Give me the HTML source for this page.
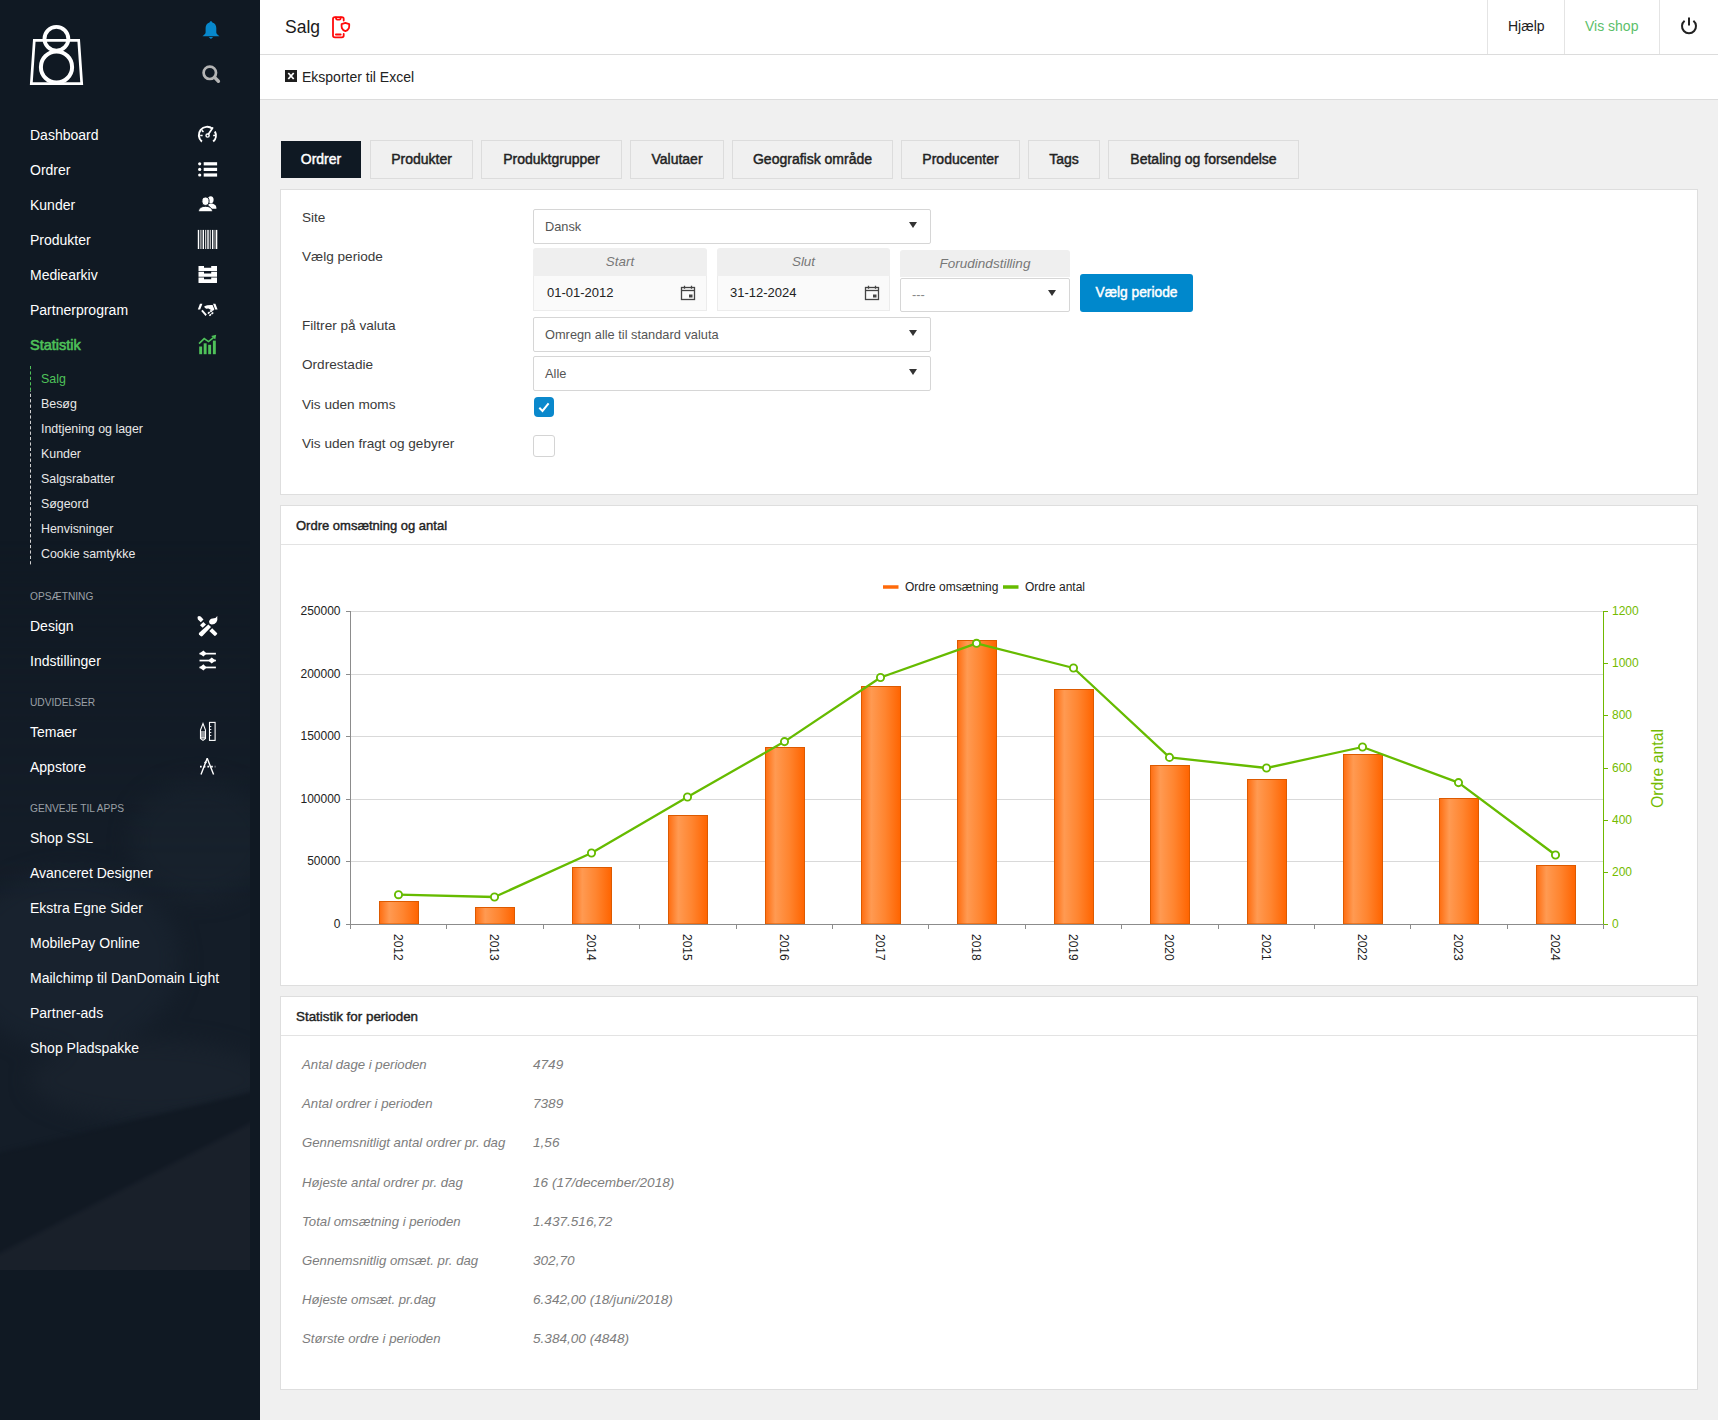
<!DOCTYPE html>
<html><head><meta charset="utf-8">
<style>
*{margin:0;padding:0;box-sizing:border-box}
html,body{width:1718px;height:1420px;overflow:hidden;background:#f0f0f0;font-family:"Liberation Sans",sans-serif;color:#222}
.abs{position:absolute}
#side{position:absolute;left:0;top:0;width:260px;height:1420px;background:#101923}
#side .bgimg{position:absolute;left:0;top:560px;width:250px;height:710px;background:linear-gradient(160deg,#131d28 0%,#1a2430 40%,#16202b 70%,#1a222d 100%)}
.mi{position:absolute;left:30px;font-size:14px;color:#fff;line-height:16px;white-space:nowrap}
.sub{position:absolute;left:41px;font-size:12.4px;color:#e8e8e8;line-height:16px;white-space:nowrap}
.sec{position:absolute;left:30px;font-size:10.2px;color:#9aa0a6;line-height:12px;white-space:nowrap}
.ic{position:absolute;left:197px;width:22px;height:22px}
#hdr{position:absolute;left:260px;top:0;width:1458px;height:55px;background:#fff;border-bottom:1px solid #dcdcdc}
#bar2{position:absolute;left:260px;top:55px;width:1458px;height:45px;background:#fff;border-bottom:1px solid #dcdcdc}
.tab{position:absolute;top:140px;height:39px;background:#f0f0f0;border:1px solid #dcdcdc;font-size:14px;font-weight:normal;-webkit-text-stroke:0.45px #222;color:#222;text-align:center;line-height:37px}
.tab.on{background:#0f1923;color:#fff;-webkit-text-stroke:0.45px #fff;border:none;top:141px;height:37px;line-height:37px}
.panel{position:absolute;left:280px;width:1418px;background:#fff;border:1px solid #dedede}
.lbl{position:absolute;left:302px;font-size:13.6px;color:#3a3a3a;line-height:16px;white-space:nowrap}
.sel{position:absolute;left:533px;width:398px;height:35px;border:1px solid #d6d6d6;border-radius:2px;background:#fff;font-size:12.8px;color:#555;line-height:33px;padding-left:11px}
.sel .arr{position:absolute;right:13px;top:12px;width:0;height:0;border-left:4px solid transparent;border-right:4px solid transparent;border-top:6px solid #333}
.ph{position:absolute;font-size:13.4px;font-style:italic;color:#777;text-align:center;background:#efefef;border-radius:3px 3px 0 0;line-height:27px}
.stl{position:absolute;left:302px;font-size:13.2px;font-style:italic;color:#7d7d7d;line-height:16px;white-space:nowrap}
.stv{position:absolute;left:533px;font-size:13.6px;font-style:italic;color:#7d7d7d;line-height:16px;white-space:nowrap}
</style></head><body>
<div id="side">
  <svg class="abs" style="left:0;top:540px" width="250" height="730" viewBox="0 0 250 730">
  <defs>
    <linearGradient id="fade" x1="0" y1="0" x2="0" y2="1">
      <stop offset="0" stop-color="#fff" stop-opacity="0"/>
      <stop offset="0.22" stop-color="#fff" stop-opacity="0.6"/>
      <stop offset="0.5" stop-color="#fff" stop-opacity="1"/>
      <stop offset="1" stop-color="#fff" stop-opacity="1"/>
    </linearGradient>
    <mask id="fm"><rect x="0" y="0" width="250" height="730" fill="url(#fade)"/></mask>
    <filter id="bl" x="-20%" y="-20%" width="140%" height="140%" color-interpolation-filters="sRGB"><feGaussianBlur stdDeviation="10"/></filter>
    <filter id="bl2" x="-5%" y="-5%" width="110%" height="110%" color-interpolation-filters="sRGB"><feGaussianBlur stdDeviation="2"/></filter>
    <clipPath id="cp"><rect x="0" y="0" width="250" height="730"/></clipPath>
  </defs>
  <g mask="url(#fm)" clip-path="url(#cp)">
    <rect x="0" y="0" width="250" height="730" fill="#141d28"/>
    <g filter="url(#bl)">
      <ellipse cx="70" cy="420" rx="110" ry="90" fill="#18222e"/>
      <ellipse cx="200" cy="300" rx="70" ry="60" fill="#18222d"/>
      <ellipse cx="150" cy="540" rx="120" ry="40" fill="#19222d"/>
    </g>
    <g filter="url(#bl2)">
      <path d="M-10 615 L260 550 L260 578 L-10 718Z" fill="#111923"/>
      <path d="M-10 718 L260 578 L260 740 L-10 740Z" fill="#19202a"/>
    </g>
  </g>
</svg>
<svg class="abs" style="left:0;top:0" width="260" height="1420" viewBox="0 0 260 1420">
<!-- logo -->
<g fill="none" stroke="#fff">
<path d="M34.3 40.4 H78.7 L81.7 83.6 H31.3 Z" stroke-width="2.7"/>
<circle cx="56.4" cy="38.8" r="11.9" stroke-width="3.9"/>
<circle cx="56.5" cy="67" r="15.6" stroke-width="4"/>
</g>
<!-- bell -->
<g fill="#0788cc">
<path d="M210.9 21.2c.8 0 1.4.6 1.4 1.3c2.7.6 4 2.9 4 5.6v4.5c0 1.2 1.5 2.6 3 3.3v.3H202.6v-.3c1.5-.7 3-2.1 3-3.3v-4.5c0-2.7 1.3-5 4-5.6c0-.7.6-1.3 1.3-1.3z"/>
<path d="M208.7 36.9h4.5l-2.25 2.1z"/>
</g>
<!-- search -->
<circle cx="209.8" cy="72.8" r="6.2" fill="none" stroke="#b4b4b4" stroke-width="2.7"/>
<path d="M214.6 77.4 L218.4 81.2" stroke="#b4b4b4" stroke-width="3.4" stroke-linecap="round"/>
<!-- dashboard gauge -->
<g fill="none" stroke="#fff">
<path d="M201.9 141.6 A8.3 8.3 0 0 1 212.4 128.7" stroke-width="2"/>
<path d="M214.9 131.4 A8.3 8.3 0 0 1 213.2 141.5" stroke-width="2"/>
<path d="M200.2 135.5 h2.4 M213.2 135.5 h2.4 M201.8 130.4 l1.7 1.5" stroke-width="1.5"/>
<path d="M208.2 134.4 L212.6 128" stroke-width="1.7" stroke-linecap="round"/>
<circle cx="207.6" cy="135.5" r="1.6" stroke-width="1.4"/>
</g>
<!-- list -->
<g fill="#fff">
<circle cx="199.7" cy="163.8" r="1.6"/><circle cx="199.7" cy="169.4" r="1.6"/><circle cx="199.7" cy="175" r="1.6"/>
<rect x="203.7" y="162.2" width="13.4" height="3.2"/><rect x="203.7" y="167.8" width="13.4" height="3.2"/><rect x="203.7" y="173.4" width="13.4" height="3.2"/>
</g>
<!-- users -->
<g fill="#fff">
<ellipse cx="210.7" cy="199.8" rx="2.9" ry="3.5"/>
<path d="M208 204.8 c1-.8 1.8-1.2 2.8-1.2 c3 0 5.6 1.6 5.6 4.6 v0.6 h-5z"/>
<ellipse cx="205.5" cy="201.2" rx="3.6" ry="4.2" stroke="#101923" stroke-width="1"/>
<path d="M198.5 211.8 c0-3.2 2.4-5.5 7-5.5 s7 2.3 7 5.5 z" stroke="#101923" stroke-width="1"/>
</g>
<!-- barcode -->
<g>
<rect x="197.8" y="229.9" width="1.4" height="19.1" fill="#fff"/>
<rect x="200.3" y="229.9" width="1.2" height="19.1" fill="#c8c8c8"/>
<rect x="202.6" y="229.9" width="1.4" height="19.1" fill="#fff"/>
<rect x="205" y="229.9" width="1.3" height="19.1" fill="#c8c8c8"/>
<rect x="207.3" y="229.9" width="1.4" height="19.1" fill="#fff"/>
<rect x="209.7" y="229.9" width="1.2" height="19.1" fill="#c8c8c8"/>
<rect x="212" y="229.9" width="1.4" height="19.1" fill="#fff"/>
<rect x="214.4" y="229.9" width="1.2" height="19.1" fill="#aaa"/>
<rect x="216" y="229.9" width="1.3" height="19.1" fill="#fff"/>
</g>
<!-- archive -->
<g fill="#fff">
<path d="M198.5 266 h5.5 v1.8 h7.2 v-1.8 h5.8 v5 h-18.5z"/>
<path d="M198.5 271.8 h5.5 v1.6 h7.2 v-1.6 h5.8 v5 h-18.5z"/>
<path d="M198.5 277.6 h5.5 v1.6 h7.2 v-1.6 h5.8 v4.8 q0 .6 -.6 .6 h-17.3 q-.6 0 -.6 -.6z"/>
</g>
<!-- handshake -->
<g fill="#fff">
<path d="M200 303.8 L202.4 303.8 L200.2 309.4 L197.8 309.4Z"/>
<path d="M213 303.8 L215.4 303.8 L217.6 309.4 L215.2 309.4Z"/>
<path d="M204.3 306.2 Q207 304.8 212.6 305 L214.4 309.6 L212.8 311 L208.4 308.4 L206.2 308.8 L204.6 307.6Z"/>
<path d="M201.2 311 L202.6 309.8 L206.8 314.6 L205.6 316Z"/>
<path d="M207.4 313 L209 311.6 L210.2 312.6 L208.6 314.2Z M209.6 311 L211 309.8 L212.6 311 L211 312.4Z M208.8 315.2 L210.4 313.8 L211.6 314.8 L210 316.2Z M211 313.4 L212.6 312 L213.8 313 L212.2 314.4Z"/>
</g>
<!-- stats -->
<g fill="#4fc25a">
<rect x="199.2" y="346.5" width="2.9" height="7.7"/>
<rect x="203.7" y="343.3" width="2.9" height="10.9"/>
<rect x="208.2" y="344.8" width="2.9" height="9.4"/>
<rect x="212.9" y="340.6" width="2.9" height="13.6"/>
<path d="M199 343.6 L204.2 338.6 L208.5 341.6 L213.5 337.6" fill="none" stroke="#4fc25a" stroke-width="1.6"/>
<path d="M211.2 335.9 L216.2 334.7 L215.3 339.6Z"/>
</g>
<!-- design -->
<g fill="#fff">
<path d="M199.2 632.8 L208.4 624.4 L211 627 L202.5 636 Q201.5 636.8 200.5 636 L199 634.5 Q198.5 633.6 199.2 632.8Z"/>
<path d="M200 625.2 L202.7 627.8 L206 624.5 L203.3 621.9Z"/>
<path d="M212.2 628.3 L217 633 Q217.5 633.6 217 634.3 L215.4 635.7 Q214.7 636.2 214.1 635.6 L209.3 630.9Z"/>
<path d="M197.8 616.5 Q199 615.5 200.7 616.6 L203.5 619.6 L200.8 622.3 L197.9 619.4 Q197.2 617.6 197.8 616.5Z"/>
<path d="M209 621.8 Q209.6 618.8 212.6 618.5 Q215.9 618.5 217.3 616 Q217.8 620 216.4 622.3 Q214.6 624.7 211.6 624.6 Q209.2 624.2 209 621.8Z"/>
</g>
<!-- sliders -->
<g fill="#fff">
<rect x="199.5" y="652.8" width="16.4" height="1.7"/>
<rect x="199.5" y="659.7" width="16.4" height="1.7"/>
<rect x="199.5" y="666.6" width="16.4" height="1.7"/>
<path d="M199.5 653.6 L203.4 650.6 L206.6 653.6 L203.4 656.6Z"/>
<path d="M208.2 660.5 L211.7 657.4 L215.6 660.5 L211.7 663.6Z"/>
<path d="M199.5 667.4 L203.4 664.3 L206.6 667.4 L203.4 670.4Z"/>
</g>
<!-- temaer -->
<g fill="none" stroke="#fff" stroke-width="1.1">
<path d="M200.5 730 L203 723.6 L205.5 730 V738.5 L203 740.4 L200.5 738.5Z"/>
<path d="M202 731 V738 M204 731 V738 M200.6 738 h4.8" />
<rect x="209.5" y="722.4" width="5.6" height="18"/>
<path d="M209.5 726.5 h1.8 M209.5 729.5 h1.8 M209.5 732.5 h1.8 M209.5 735.5 h1.8" stroke-width="0.9"/>
</g>
<!-- appstore -->
<g fill="none" stroke="#fff">
<path d="M201 774.5 L207.2 758.3 M207.2 758.3 L213.6 774.5" stroke-width="1.4"/>
<path d="M200 766.7 H215.3" stroke-width="1.7" stroke-dasharray="1.7 2"/>
<circle cx="205.5" cy="762.5" r="0.8" stroke-width="1"/>
</g>
</svg>
  <div class="mi" style="top:127px">Dashboard</div>
  <div class="mi" style="top:162px">Ordrer</div>
  <div class="mi" style="top:197px">Kunder</div>
  <div class="mi" style="top:232px">Produkter</div>
  <div class="mi" style="top:267px">Mediearkiv</div>
  <div class="mi" style="top:302px">Partnerprogram</div>
  <div class="mi" style="top:337px;color:#4fc25a;-webkit-text-stroke:0.6px #4fc25a;font-size:14.5px">Statistik</div>
  <svg class="abs" style="left:29px;top:366px" width="3" height="200" viewBox="0 0 3 200">
    <path d="M1.5 0 V25" stroke="#4fc25a" stroke-width="1" stroke-dasharray="3.2 2.2"/>
    <path d="M1.5 25 V200" stroke="#d0d0d0" stroke-width="1" stroke-dasharray="3.2 2.2" stroke-dashoffset="2.6"/>
  </svg>
  <div class="sub" style="top:371px;color:#4fc25a">Salg</div>
  <div class="sub" style="top:396px">Besøg</div>
  <div class="sub" style="top:421px">Indtjening og lager</div>
  <div class="sub" style="top:446px">Kunder</div>
  <div class="sub" style="top:471px">Salgsrabatter</div>
  <div class="sub" style="top:496px">Søgeord</div>
  <div class="sub" style="top:521px">Henvisninger</div>
  <div class="sub" style="top:546px">Cookie samtykke</div>
  <div class="sec" style="top:591px">OPSÆTNING</div>
  <div class="mi" style="top:618px">Design</div>
  <div class="mi" style="top:653px">Indstillinger</div>
  <div class="sec" style="top:697px">UDVIDELSER</div>
  <div class="mi" style="top:724px">Temaer</div>
  <div class="mi" style="top:759px">Appstore</div>
  <div class="sec" style="top:803px">GENVEJE TIL APPS</div>
  <div class="mi" style="top:830px">Shop SSL</div>
  <div class="mi" style="top:865px">Avanceret Designer</div>
  <div class="mi" style="top:900px">Ekstra Egne Sider</div>
  <div class="mi" style="top:935px">MobilePay Online</div>
  <div class="mi" style="top:970px">Mailchimp til DanDomain Light</div>
  <div class="mi" style="top:1005px">Partner-ads</div>
  <div class="mi" style="top:1040px">Shop Pladspakke</div>
</div>
<div id="hdr"></div>
<div class="abs" style="left:285px;top:17px;font-size:17.5px;color:#1a1a1a;line-height:20px">Salg</div>
<svg class="abs" style="left:325px;top:10px" width="35" height="35" viewBox="0 0 35 35">
  <g fill="none" stroke="#ff0a0a" stroke-width="1.8" stroke-linecap="round">
  <path d="M18.7 10.6 V9 Q18.7 7.1 16.8 7.1 H9.9 Q8 7.1 8 9 V25.5 Q8 27.4 9.9 27.4 H16.8 Q18.7 27.4 18.7 25.5 V24"/>
  <path d="M10.9 7.4 Q11 9.6 12.3 9.6 H14.4 Q15.7 9.6 15.8 7.4"/>
  <path d="M10.9 24.5 H15.7"/>
  <path d="M20.4 12.9 L16.6 14.1 Q16.4 16.3 16.9 18.2 Q17.8 20.4 20.4 21.2 Q23 20.4 23.9 18.2 Q24.4 16.3 24.2 14.1 Z" stroke-linejoin="round"/>
  </g>
</svg>
<div class="abs" style="left:1487px;top:0;width:1px;height:54px;background:#e4e4e4"></div>
<div class="abs" style="left:1564px;top:0;width:1px;height:54px;background:#e4e4e4"></div>
<div class="abs" style="left:1659px;top:0;width:1px;height:54px;background:#e4e4e4"></div>
<div class="abs" style="left:1508px;top:18px;font-size:14px;color:#222;line-height:16px">Hjælp</div>
<div class="abs" style="left:1585px;top:18px;font-size:14px;color:#5cc06a;line-height:16px">Vis shop</div>
<svg class="abs" style="left:1679px;top:16px" width="20" height="20" viewBox="0 0 20 20">
  <path d="M5.6 4.8 A7 7 0 1 0 14.4 4.8" fill="none" stroke="#222" stroke-width="2"/>
  <path d="M10 1.5 V9.5" stroke="#222" stroke-width="2"/>
</svg>
<div id="bar2"></div>
<svg class="abs" style="left:285px;top:70px" width="12" height="12" viewBox="0 0 12 12">
  <rect x="0" y="0" width="12" height="12" fill="#1e1e1e"/>
  <path d="M3.3 3 L8.7 9 M8.7 3 L3.3 9" stroke="#fff" stroke-width="1.8"/>
</svg>
<div class="abs" style="left:302px;top:69px;font-size:14px;color:#222;line-height:16px">Eksporter til Excel</div>

<!-- tabs -->
<div class="tab on" style="left:281px;width:80px">Ordrer</div>
<div class="tab" style="left:370px;width:103px">Produkter</div>
<div class="tab" style="left:481px;width:141px">Produktgrupper</div>
<div class="tab" style="left:630px;width:94px">Valutaer</div>
<div class="tab" style="left:732px;width:161px">Geografisk område</div>
<div class="tab" style="left:901px;width:119px">Producenter</div>
<div class="tab" style="left:1028px;width:72px">Tags</div>
<div class="tab" style="left:1108px;width:191px">Betaling og forsendelse</div>

<!-- form panel -->
<div class="panel" style="top:189px;height:306px"></div>
<div class="lbl" style="top:210px">Site</div>
<div class="sel" style="top:209px">Dansk<div class="arr"></div></div>
<div class="lbl" style="top:249px">Vælg periode</div>
<div class="ph" style="left:533px;top:248px;width:174px;height:28px">Start</div>
<div class="abs" style="left:533px;top:276px;width:174px;height:35px;background:#fafafa;border:1px solid #ececec;border-top:none;font-size:13px;color:#222;line-height:34px;padding-left:13px">01-01-2012</div>
<div class="ph" style="left:717px;top:248px;width:173px;height:28px">Slut</div>
<div class="abs" style="left:717px;top:276px;width:173px;height:35px;background:#fafafa;border:1px solid #ececec;border-top:none;font-size:13px;color:#222;line-height:34px;padding-left:12px">31-12-2024</div>
<svg class="abs" style="left:680px;top:285px" width="16" height="16" viewBox="0 0 16 16">
  <rect x="1.5" y="2.5" width="13" height="12" fill="none" stroke="#444" stroke-width="1.3"/>
  <path d="M1.5 5.5 h13" stroke="#444" stroke-width="1.3"/>
  <path d="M4.5 0.8 v3 M11.5 0.8 v3" stroke="#444" stroke-width="1.3"/>
  <rect x="9" y="9.5" width="3.5" height="3" fill="#444"/>
</svg>
<svg class="abs" style="left:864px;top:285px" width="16" height="16" viewBox="0 0 16 16">
  <rect x="1.5" y="2.5" width="13" height="12" fill="none" stroke="#444" stroke-width="1.3"/>
  <path d="M1.5 5.5 h13" stroke="#444" stroke-width="1.3"/>
  <path d="M4.5 0.8 v3 M11.5 0.8 v3" stroke="#444" stroke-width="1.3"/>
  <rect x="9" y="9.5" width="3.5" height="3" fill="#444"/>
</svg>
<div class="ph" style="left:900px;top:250px;width:170px;height:27px;font-size:13.5px">Forudindstilling</div>
<div class="sel" style="left:900px;top:278px;width:170px;height:34px;color:#888;line-height:31px">---<div class="arr" style="top:11px"></div></div>
<div class="abs" style="left:1080px;top:274px;width:113px;height:38px;background:#0088cc;border-radius:3px;color:#fff;font-size:13.8px;-webkit-text-stroke:0.45px #fff;text-align:center;line-height:37px">Vælg periode</div>
<div class="lbl" style="top:318px">Filtrer på valuta</div>
<div class="sel" style="top:317px">Omregn alle til standard valuta<div class="arr"></div></div>
<div class="lbl" style="top:357px">Ordrestadie</div>
<div class="sel" style="top:356px">Alle<div class="arr"></div></div>
<div class="lbl" style="top:397px">Vis uden moms</div>
<div class="abs" style="left:534px;top:397px;width:20px;height:20px;background:#0a88cc;border-radius:4px"></div>
<svg class="abs" style="left:534px;top:397px" width="20" height="20" viewBox="0 0 20 20"><path d="M5.3 10.8 L8.5 14 L14.6 6.4" fill="none" stroke="#fff" stroke-width="2"/></svg>
<div class="lbl" style="top:436px">Vis uden fragt og gebyrer</div>
<div class="abs" style="left:533px;top:435px;width:22px;height:22px;background:#fff;border:1px solid #d4d4d4;border-radius:3px"></div>

<!-- chart panel -->
<div class="panel" style="top:505px;height:481px"></div>
<div class="abs" style="left:281px;top:544px;width:1416px;height:1px;background:#e3e3e3"></div>
<div class="abs" style="left:296px;top:518px;font-size:13px;-webkit-text-stroke:0.4px #222;color:#222;line-height:15px">Ordre omsætning og antal</div>
<div id="chart"><svg class="abs" style="left:282px;top:546px" width="1414" height="438" viewBox="282 546 1414 438">
<defs><linearGradient id="bg" x1="0" x2="1" y1="0" y2="0"><stop offset="0" stop-color="#ff6d10"/><stop offset="0.25" stop-color="#ff9a52"/><stop offset="0.6" stop-color="#ff8530"/><stop offset="1" stop-color="#ff6400"/></linearGradient></defs>
<path d="M346 924.5 H350" stroke="#8c8c8c" stroke-width="1"/>
<text x="340.5" y="928" text-anchor="end" font-size="12" fill="#222">0</text>
<path d="M351 861.5 H1603" stroke="#d9d9d9" stroke-width="1"/>
<path d="M346 861.5 H350" stroke="#8c8c8c" stroke-width="1"/>
<text x="340.5" y="865" text-anchor="end" font-size="12" fill="#222">50000</text>
<path d="M351 799.5 H1603" stroke="#d9d9d9" stroke-width="1"/>
<path d="M346 799.5 H350" stroke="#8c8c8c" stroke-width="1"/>
<text x="340.5" y="803" text-anchor="end" font-size="12" fill="#222">100000</text>
<path d="M351 736.5 H1603" stroke="#d9d9d9" stroke-width="1"/>
<path d="M346 736.5 H350" stroke="#8c8c8c" stroke-width="1"/>
<text x="340.5" y="740" text-anchor="end" font-size="12" fill="#222">150000</text>
<path d="M351 674.5 H1603" stroke="#d9d9d9" stroke-width="1"/>
<path d="M346 674.5 H350" stroke="#8c8c8c" stroke-width="1"/>
<text x="340.5" y="678" text-anchor="end" font-size="12" fill="#222">200000</text>
<path d="M351 611.5 H1603" stroke="#d9d9d9" stroke-width="1"/>
<path d="M346 611.5 H350" stroke="#8c8c8c" stroke-width="1"/>
<text x="340.5" y="615" text-anchor="end" font-size="12" fill="#222">250000</text>
<path d="M1604 924.5 H1608" stroke="#70b800" stroke-width="1"/>
<text x="1612" y="928" font-size="12" fill="#74bb00">0</text>
<path d="M1604 872.5 H1608" stroke="#70b800" stroke-width="1"/>
<text x="1612" y="876" font-size="12" fill="#74bb00">200</text>
<path d="M1604 820.5 H1608" stroke="#70b800" stroke-width="1"/>
<text x="1612" y="824" font-size="12" fill="#74bb00">400</text>
<path d="M1604 768.5 H1608" stroke="#70b800" stroke-width="1"/>
<text x="1612" y="772" font-size="12" fill="#74bb00">600</text>
<path d="M1604 715.5 H1608" stroke="#70b800" stroke-width="1"/>
<text x="1612" y="719" font-size="12" fill="#74bb00">800</text>
<path d="M1604 663.5 H1608" stroke="#70b800" stroke-width="1"/>
<text x="1612" y="667" font-size="12" fill="#74bb00">1000</text>
<path d="M1604 611.5 H1608" stroke="#70b800" stroke-width="1"/>
<text x="1612" y="615" font-size="12" fill="#74bb00">1200</text>
<path d="M1603.5 611 V925" stroke="#70b800" stroke-width="1"/>
<rect x="379.5" y="901.5" width="39" height="22.5" fill="url(#bg)" stroke="#dd5a00" stroke-width="1"/>
<text transform="translate(393.9,934) rotate(90)" font-size="12" fill="#222">2012</text>
<rect x="475.5" y="907.5" width="39" height="16.5" fill="url(#bg)" stroke="#dd5a00" stroke-width="1"/>
<text transform="translate(489.9,934) rotate(90)" font-size="12" fill="#222">2013</text>
<rect x="572.5" y="867.5" width="39" height="56.5" fill="url(#bg)" stroke="#dd5a00" stroke-width="1"/>
<text transform="translate(586.9,934) rotate(90)" font-size="12" fill="#222">2014</text>
<rect x="668.5" y="815.5" width="39" height="108.5" fill="url(#bg)" stroke="#dd5a00" stroke-width="1"/>
<text transform="translate(682.9,934) rotate(90)" font-size="12" fill="#222">2015</text>
<rect x="765.5" y="747.5" width="39" height="176.5" fill="url(#bg)" stroke="#dd5a00" stroke-width="1"/>
<text transform="translate(779.9,934) rotate(90)" font-size="12" fill="#222">2016</text>
<rect x="861.5" y="686.5" width="39" height="237.5" fill="url(#bg)" stroke="#dd5a00" stroke-width="1"/>
<text transform="translate(875.9,934) rotate(90)" font-size="12" fill="#222">2017</text>
<rect x="957.5" y="640.5" width="39" height="283.5" fill="url(#bg)" stroke="#dd5a00" stroke-width="1"/>
<text transform="translate(971.9,934) rotate(90)" font-size="12" fill="#222">2018</text>
<rect x="1054.5" y="689.5" width="39" height="234.5" fill="url(#bg)" stroke="#dd5a00" stroke-width="1"/>
<text transform="translate(1068.9,934) rotate(90)" font-size="12" fill="#222">2019</text>
<rect x="1150.5" y="765.5" width="39" height="158.5" fill="url(#bg)" stroke="#dd5a00" stroke-width="1"/>
<text transform="translate(1164.9,934) rotate(90)" font-size="12" fill="#222">2020</text>
<rect x="1247.5" y="779.5" width="39" height="144.5" fill="url(#bg)" stroke="#dd5a00" stroke-width="1"/>
<text transform="translate(1261.9,934) rotate(90)" font-size="12" fill="#222">2021</text>
<rect x="1343.5" y="754.5" width="39" height="169.5" fill="url(#bg)" stroke="#dd5a00" stroke-width="1"/>
<text transform="translate(1357.9,934) rotate(90)" font-size="12" fill="#222">2022</text>
<rect x="1439.5" y="798.5" width="39" height="125.5" fill="url(#bg)" stroke="#dd5a00" stroke-width="1"/>
<text transform="translate(1453.9,934) rotate(90)" font-size="12" fill="#222">2023</text>
<rect x="1536.5" y="865.5" width="39" height="58.5" fill="url(#bg)" stroke="#dd5a00" stroke-width="1"/>
<text transform="translate(1550.9,934) rotate(90)" font-size="12" fill="#222">2024</text>
<path d="M350.5 611 V929" stroke="#8c8c8c" stroke-width="1"/>
<path d="M346 924.5 H1604" stroke="#8c8c8c" stroke-width="1"/>
<path d="M446.5 925 V929" stroke="#8c8c8c" stroke-width="1"/>
<path d="M543.5 925 V929" stroke="#8c8c8c" stroke-width="1"/>
<path d="M639.5 925 V929" stroke="#8c8c8c" stroke-width="1"/>
<path d="M736.5 925 V929" stroke="#8c8c8c" stroke-width="1"/>
<path d="M832.5 925 V929" stroke="#8c8c8c" stroke-width="1"/>
<path d="M928.5 925 V929" stroke="#8c8c8c" stroke-width="1"/>
<path d="M1025.5 925 V929" stroke="#8c8c8c" stroke-width="1"/>
<path d="M1121.5 925 V929" stroke="#8c8c8c" stroke-width="1"/>
<path d="M1218.5 925 V929" stroke="#8c8c8c" stroke-width="1"/>
<path d="M1314.5 925 V929" stroke="#8c8c8c" stroke-width="1"/>
<path d="M1410.5 925 V929" stroke="#8c8c8c" stroke-width="1"/>
<path d="M1507.5 925 V929" stroke="#8c8c8c" stroke-width="1"/>
<path d="M1603.5 925 V929" stroke="#8c8c8c" stroke-width="1"/>
<path d="M398.5 894.7 L494.5 897 L591.5 853 L687.5 797 L784.5 741.6 L880.5 677.5 L976.5 643.3 L1073.5 668 L1169.5 757.4 L1266.5 768 L1362.5 747 L1458.5 782.6 L1555.5 855" fill="none" stroke="#66bb00" stroke-width="2.3" stroke-linejoin="round"/>
<circle cx="398.5" cy="894.7" r="3.6" fill="#fff" stroke="#66bb00" stroke-width="1.9"/>
<circle cx="494.5" cy="897" r="3.6" fill="#fff" stroke="#66bb00" stroke-width="1.9"/>
<circle cx="591.5" cy="853" r="3.6" fill="#fff" stroke="#66bb00" stroke-width="1.9"/>
<circle cx="687.5" cy="797" r="3.6" fill="#fff" stroke="#66bb00" stroke-width="1.9"/>
<circle cx="784.5" cy="741.6" r="3.6" fill="#fff" stroke="#66bb00" stroke-width="1.9"/>
<circle cx="880.5" cy="677.5" r="3.6" fill="#fff" stroke="#66bb00" stroke-width="1.9"/>
<circle cx="976.5" cy="643.3" r="3.6" fill="#fff" stroke="#66bb00" stroke-width="1.9"/>
<circle cx="1073.5" cy="668" r="3.6" fill="#fff" stroke="#66bb00" stroke-width="1.9"/>
<circle cx="1169.5" cy="757.4" r="3.6" fill="#fff" stroke="#66bb00" stroke-width="1.9"/>
<circle cx="1266.5" cy="768" r="3.6" fill="#fff" stroke="#66bb00" stroke-width="1.9"/>
<circle cx="1362.5" cy="747" r="3.6" fill="#fff" stroke="#66bb00" stroke-width="1.9"/>
<circle cx="1458.5" cy="782.6" r="3.6" fill="#fff" stroke="#66bb00" stroke-width="1.9"/>
<circle cx="1555.5" cy="855" r="3.6" fill="#fff" stroke="#66bb00" stroke-width="1.9"/>
<path d="M883 587 H898.5" stroke="#ff6a0a" stroke-width="3.5"/>
<text x="905" y="591" font-size="12" fill="#222">Ordre omsætning</text>
<path d="M1003 587 H1018.5" stroke="#66bb00" stroke-width="3.5"/>
<text x="1025" y="591" font-size="12" fill="#222">Ordre antal</text>
<text transform="translate(1663.1,768.5) rotate(-90)" text-anchor="middle" font-size="15.8" fill="#74bb00">Ordre antal</text>
</svg></div>

<!-- stats panel -->
<div class="panel" style="top:996px;height:394px"></div>
<div class="abs" style="left:281px;top:1035px;width:1416px;height:1px;background:#e3e3e3"></div>
<div class="abs" style="left:296px;top:1009px;font-size:13.4px;-webkit-text-stroke:0.4px #222;color:#222;line-height:15px">Statistik for perioden</div>
<div class="stl" style="top:1057px">Antal dage i perioden</div><div class="stv" style="top:1057px">4749</div>
<div class="stl" style="top:1096px">Antal ordrer i perioden</div><div class="stv" style="top:1096px">7389</div>
<div class="stl" style="top:1135px">Gennemsnitligt antal ordrer pr. dag</div><div class="stv" style="top:1135px">1,56</div>
<div class="stl" style="top:1175px">Højeste antal ordrer pr. dag</div><div class="stv" style="top:1175px">16 (17/december/2018)</div>
<div class="stl" style="top:1214px">Total omsætning i perioden</div><div class="stv" style="top:1214px">1.437.516,72</div>
<div class="stl" style="top:1253px">Gennemsnitlig omsæt. pr. dag</div><div class="stv" style="top:1253px">302,70</div>
<div class="stl" style="top:1292px">Højeste omsæt. pr.dag</div><div class="stv" style="top:1292px">6.342,00 (18/juni/2018)</div>
<div class="stl" style="top:1331px">Største ordre i perioden</div><div class="stv" style="top:1331px">5.384,00 (4848)</div>
</body></html>
